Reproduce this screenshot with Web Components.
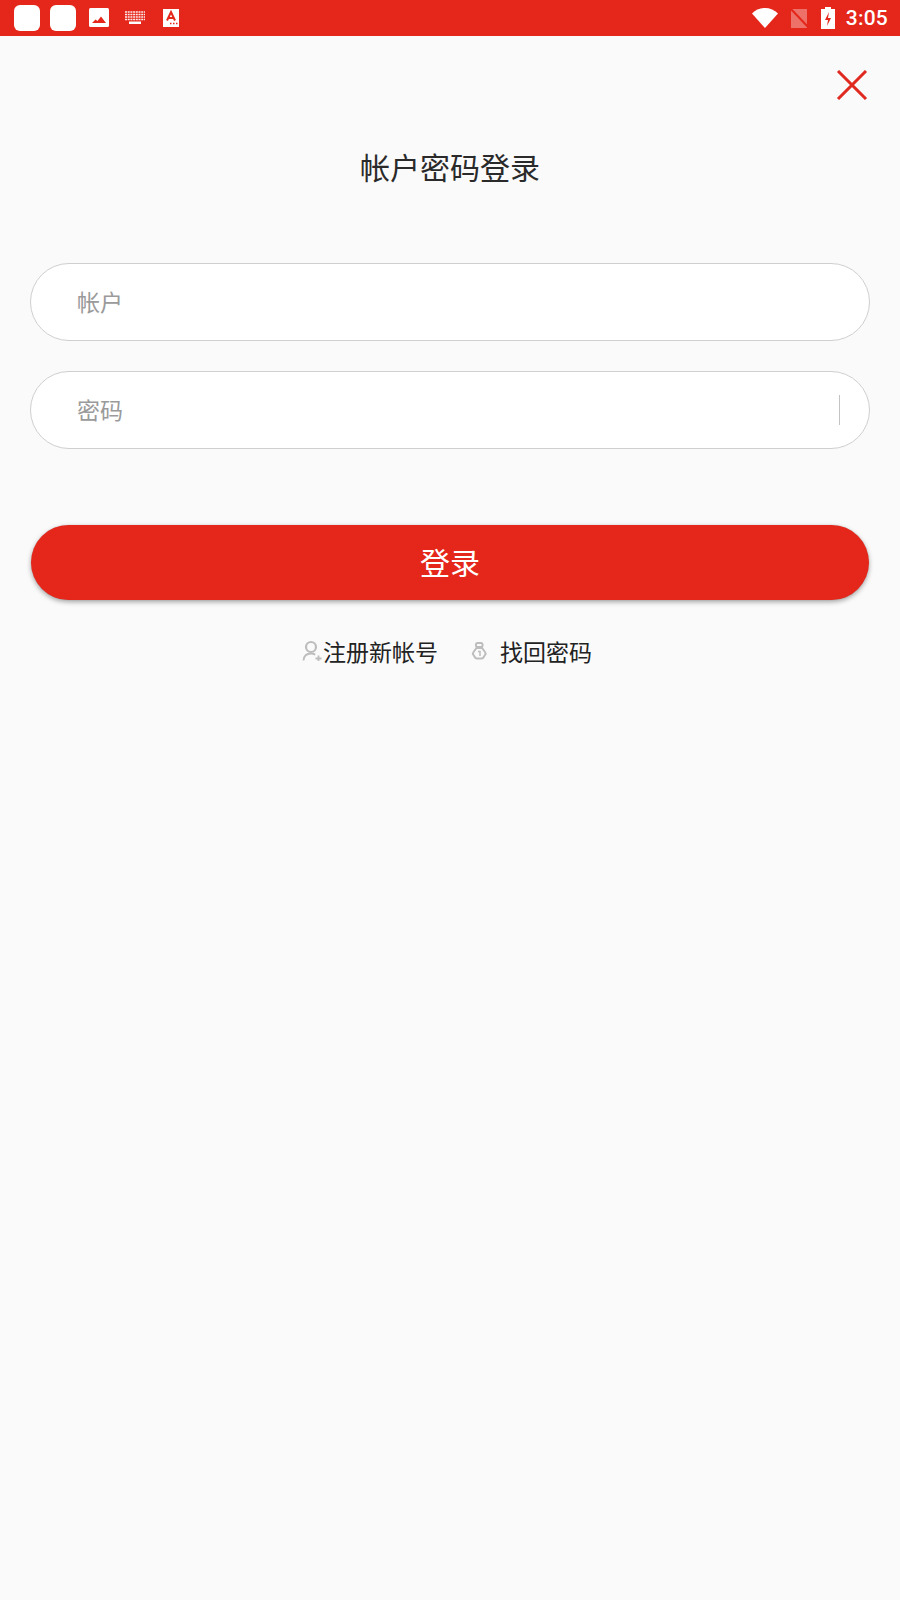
<!DOCTYPE html>
<html lang="zh">
<head>
<meta charset="utf-8">
<title>帐户密码登录</title>
<style>
  html, body { margin: 0; height: 100%; background: #fafafa; }
  body { font-family: "Noto Sans CJK SC", "Noto Sans", sans-serif; }
  login-page { height: 1600px; }
</style>
</head>
<body>
<login-page></login-page>
<script>
class StatusBar extends HTMLElement {
  constructor() {
    super();
    this.attachShadow({ mode: 'open' });
    this.shadowRoot.innerHTML = `
      <style>
        :host { display: flex; align-items: center; height: 36px; background: #e5261a; color: #fff; padding: 0 12px 0 14px; box-sizing: border-box; }
        .left, .right { display: flex; align-items: center; }
        .right { margin-left: auto; }
        .app { width: 26px; height: 26px; background: #fff; border-radius: 6px; margin-right: 10px; }
        svg { display: block; }
        .time { font: 500 21px Roboto, sans-serif; margin-left: 10px; letter-spacing: .2px; }
      </style>
      <div class="left">
        <div class="app"></div>
        <div class="app" style="margin-right:12px"></div>
        <svg width="22" height="20" viewBox="0 0 22 20" style="margin-right:14px"><rect x="1" y="0" width="20" height="19" rx="1.500" fill="#fff"/><path d="M4 15l3.500-3.500 2 1.500 3.500-4.500 5 6.500z" fill="#e5261a"/></svg>
        <svg width="22" height="14" viewBox="0 0 22 14" style="margin-right:16px"><path d="M1 1h20M1 3.500h20M1 6h20M1 8.500h20" stroke="#fff" stroke-width="1.500" stroke-dasharray="2 .7" fill="none" opacity=".9"/><rect x="5" y="10.500" width="12" height="2.500" fill="#fff"/></svg>
        <svg width="18" height="20" viewBox="0 0 18 20"><rect x="1" y="1" width="16" height="18" fill="#fff"/><path d="M5 12.500L9 4l4 8.500M6.300 10h5.400" fill="none" stroke="#e5261a" stroke-width="2"/><path d="M8 15.500h1.500M11 15.500h1.500M14 15.500h1.500" stroke="#e5261a" stroke-width="1.500"/></svg>
      </div>
      <div class="right">
        <svg width="28" height="22" viewBox="0 0 28 22" style="margin-right:8px"><path d="M1 6.500C4.500 3 9 1 14 1s9.500 2 13 5.500L14 21z" fill="#fff"/></svg>
        <svg width="24" height="24" viewBox="0 0 24 24" style="margin-right:9px"><path d="M4 3h16v19H4z" fill="#fff" opacity=".35"/><path d="M3 2l19 20" stroke="#e5261a" stroke-width="2"/></svg>
        <svg width="16" height="24" viewBox="0 0 16 24"><path d="M5 1h6v2h4v20H1V3h4z" fill="#fff"/><path d="M9 6l-4 8h3l-1 6 4-8H8z" fill="#e5261a"/></svg>
        <span class="time">3:05</span>
      </div>`;
  }
}
customElements.define('status-bar', StatusBar);

class TextField extends HTMLElement {
  constructor() {
    super();
    this.attachShadow({ mode: 'open' });
    this.shadowRoot.innerHTML = `
      <style>
        :host { display: flex; align-items: center; height: 78px; box-sizing: border-box; background: #fff; border: 1px solid #cfcfcf; border-radius: 39px; padding: 0 29px 0 46px; color: #9a9a9a; font-size: 23px; }
        .label { margin-bottom: 2px; }
        .bar { display: none; width: 1px; height: 30px; background: #c4c4c4; margin-left: auto; }
        :host([divider]) .bar { display: block; }
      </style>
      <div class="label"><slot></slot></div>
      <div class="bar"></div>`;
  }
}
customElements.define('text-field', TextField);

class LoginButton extends HTMLElement {
  constructor() {
    super();
    this.attachShadow({ mode: 'open' });
    this.shadowRoot.innerHTML = `
      <style>
        :host { display: flex; align-items: center; justify-content: center; height: 75px; box-sizing: border-box; padding-bottom: 3px; background: #e5261a; color: #fff; font-size: 30px; border-radius: 38px; box-shadow: 0 2px 5px rgba(0,0,0,.35), 0 0 1px rgba(0,0,0,.2); }
      </style>
      <slot></slot>`;
  }
}
customElements.define('login-button', LoginButton);

class LinkItem extends HTMLElement {
  constructor() {
    super();
    this.attachShadow({ mode: 'open' });
    this.shadowRoot.innerHTML = `
      <style>
        :host { display: flex; align-items: center; color: #222; font-size: 23px; }
      </style>
      <slot name="icon"></slot>
      <slot></slot>`;
  }
}
customElements.define('link-item', LinkItem);

class LoginPage extends HTMLElement {
  constructor() {
    super();
    this.attachShadow({ mode: 'open' });
    this.shadowRoot.innerHTML = `
      <style>
        :host { display: block; background: #fafafa; font-family: "Noto Sans CJK SC", "Noto Sans", sans-serif; }
        .close { display: flex; justify-content: flex-end; padding: 34px 32px 0 0; }
        svg { display: block; }
        h1 { margin: 0; padding-top: 44px; text-align: center; font-size: 30px; font-weight: 400; line-height: 44px; color: #2a2a2a; }
        .form { display: flex; flex-direction: column; gap: 30px; padding: 75px 30px 0; }
        login-button { margin: 46px 1px 0; }
        .links { display: flex; justify-content: center; gap: 32px; padding: 34px 0 0 0; margin-left: -6px; line-height: 34px; }
      </style>
      <status-bar></status-bar>
      <div class="close">
        <svg width="32" height="30" viewBox="0 0 32 30"><path d="M2 1l28 28M30 1L2 29" stroke="#e02a20" stroke-width="3" fill="none"/></svg>
      </div>
      <h1>帐户密码登录</h1>
      <div class="form">
        <text-field>帐户</text-field>
        <text-field divider>密码</text-field>
        <login-button>登录</login-button>
      </div>
      <div class="links">
        <link-item>
          <svg slot="icon" width="20" height="22" viewBox="0 0 20 22" style="margin-right:1px"><circle cx="9" cy="7" r="5" fill="none" stroke="#bdbdbd" stroke-width="2.200"/><path d="M1.500 20.500c.3-4 2.600-7 7.500-7 1.800 0 3.200.4 4.200 1.200M13.500 18.500h6M16.500 15.500v5.500" fill="none" stroke="#bdbdbd" stroke-width="1.800"/></svg>
          注册新帐号
        </link-item>
        <link-item>
          <svg slot="icon" width="18" height="20" viewBox="0 0 18 20" style="margin-right:12px"><rect x="6" y="2" width="6.500" height="4" rx="1.500" fill="none" stroke="#bdbdbd" stroke-width="2"/><path d="M6.500 7L3.500 11c-.8 1-.8 2 0 3l2 3c.4.400.8.500 1.500.500h4.500c.7 0 1.100-.1 1.500-.5l2-3c.8-1 .8-2 0-3l-3-4z" fill="none" stroke="#bdbdbd" stroke-width="2"/><path d="M8 10.500h2v4.500" fill="none" stroke="#bdbdbd" stroke-width="1.500"/></svg>
          找回密码
        </link-item>
      </div>`;
  }
}
customElements.define('login-page', LoginPage);
</script>
</body>
</html>
